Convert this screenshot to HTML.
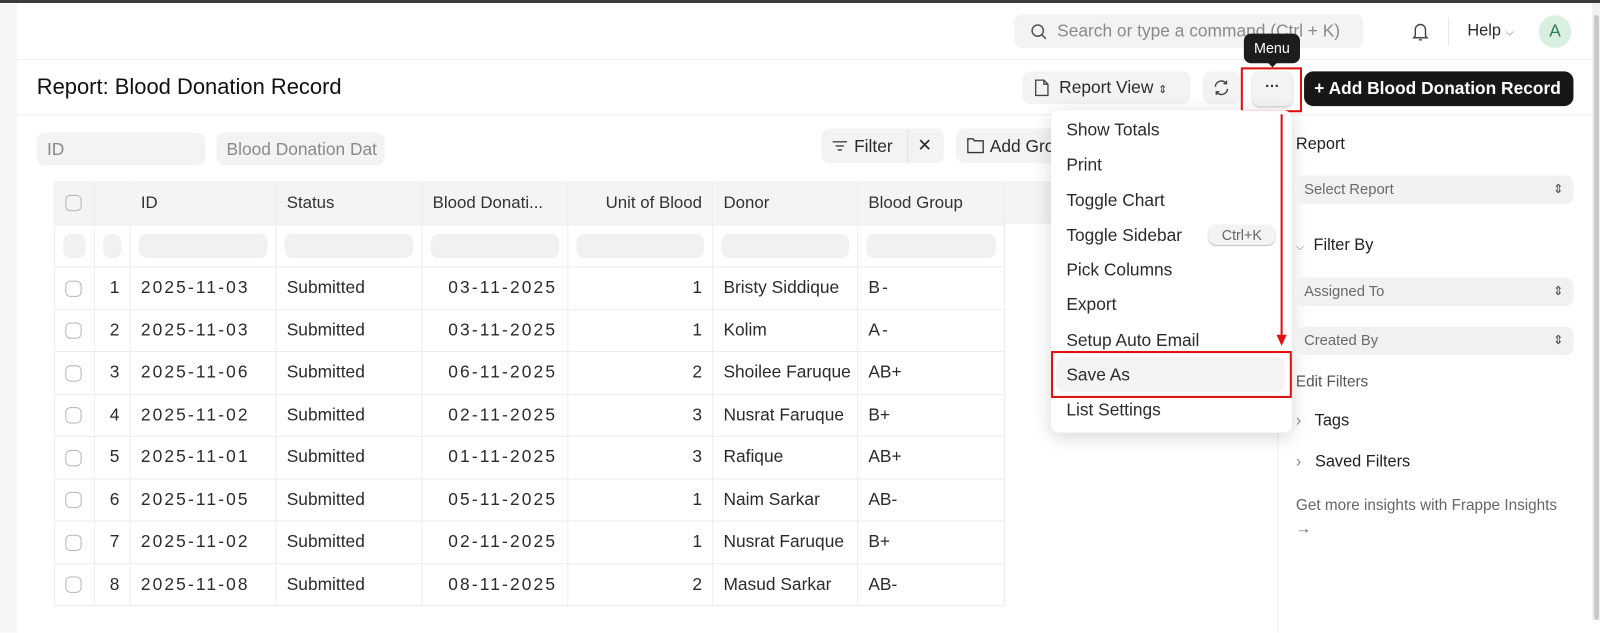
<!DOCTYPE html>
<html><head><meta charset="utf-8"><style>
*{box-sizing:border-box;margin:0;padding:0}
body{width:1600px;height:620px;overflow:hidden;background:#fff;font-family:"Liberation Sans",sans-serif;color:#2b2b2b;position:relative;font-size:17px}
#w{position:absolute;left:0;top:0;width:1568px;height:608px;transform:scale(1.0204);transform-origin:0 0}
.a{position:absolute}
.pill{position:absolute;background:#f3f3f3;border-radius:8px}
.ph{color:#8a8a8a}
table{position:absolute;left:53px;top:178px;width:931px;border-collapse:collapse;table-layout:fixed}
td{border:1px solid #ececec;height:41.5px;padding:0 10px;white-space:nowrap;overflow:hidden;font-size:17px}
tr.h td{background:#f4f4f4;color:#333;font-size:16.5px}
tr.f td{padding:0 8px}
.fb{height:24px;background:#f1f1f1;border-radius:8px}
.cb{display:inline-block;width:16px;height:16px;border:1.5px solid #b5b5b5;border-radius:5px;vertical-align:middle}
.num{text-align:right}
.dt{letter-spacing:2.1px}
.mi{position:absolute;left:1045px;font-size:17px;color:#2b2b2b}
.side{position:absolute;left:1270px;font-size:15px;color:#333}
.sel{position:absolute;left:1270px;width:272px;height:28px;background:#f1f1f1;border-radius:8px;font-size:14.5px;color:#6a6a6a;padding:6px 8px}
.sel:after{content:"⇕";position:absolute;right:10px;top:6px;font-size:12px;color:#444}
</style></head><body>
<div class="a" style="left:0;top:0;width:1600px;height:3px;background:#3a3a3a"></div>
<div class="a" style="left:1592px;top:3px;width:8px;height:617px;background:#f1f1f1"></div>
<div class="a" style="left:1594px;top:15px;width:5px;height:605px;background:#c9c9c9;border-radius:3px"></div>
<div id="w">
<div class="a" style="left:0;top:3px;width:17px;height:617px;background:#f6f6f6"></div>
<div class="a" style="left:17px;top:58px;width:1543px;height:1px;background:#eeeeee"></div>
<div class="a" style="left:17px;top:112px;width:1543px;height:1px;background:#eeeeee"></div>
<div class="a" style="left:1252px;top:112px;width:1px;height:508px;background:#eeeeee"></div>

<!-- navbar -->
<div class="pill" style="left:994px;top:14px;width:342px;height:33px"></div>
<svg class="a" style="left:1009px;top:22px" width="18" height="18" viewBox="0 0 18 18" fill="none" stroke="#555" stroke-width="1.5"><circle cx="8" cy="8" r="5.5"/><path d="M12 12l4 4"/></svg>
<div class="a ph" style="left:1036px;top:21px;font-size:17px;color:#8a8a8a;white-space:nowrap">Search or type a command (Ctrl + K)</div>
<svg class="a" style="left:1383px;top:21px" width="18" height="20" viewBox="0 0 18 20" fill="none" stroke="#444" stroke-width="1.4"><path d="M4 14V8a5 5 0 0110 0v6l1.5 2h-13z"/><path d="M7.5 18h3"/></svg>
<div class="a" style="left:1419px;top:17px;width:1px;height:28px;background:#e5e5e5"></div>
<div class="a" style="left:1438px;top:22px;font-size:16px">Help <span style="font-size:11px;color:#666">⌵</span></div>
<div class="a" style="left:1508px;top:15px;width:32px;height:32px;border-radius:50%;background:#d9f0e0;color:#2e7d4f;text-align:center;line-height:32px;font-size:17px">A</div>

<!-- header -->
<div class="a" style="left:36px;top:73px;font-size:21.5px;color:#111;white-space:nowrap">Report: Blood Donation Record</div>
<div class="pill" style="left:1002px;top:70px;width:165px;height:32px"></div>
<svg class="a" style="left:1013px;top:77px" width="16" height="18" viewBox="0 0 16 18" fill="none" stroke="#444" stroke-width="1.3"><path d="M2 1.5h8l4 4v11H2z"/><path d="M10 1.5v4h4"/></svg>
<div class="a" style="left:1038px;top:76px;font-size:17px">Report View <span style="font-size:11px">⇕</span></div>
<div class="pill" style="left:1179px;top:70px;width:37px;height:32px"></div>
<svg class="a" style="left:1188px;top:77px" width="18" height="18" viewBox="0 0 18 18" fill="none" stroke="#444" stroke-width="1.4"><path d="M3 8a6 6 0 0110.5-3.5M15 10a6 6 0 01-10.5 3.5"/><path d="M14 2v3h-3M4 16v-3h3"/></svg>
<div class="a" style="left:1227px;top:70px;width:40px;height:34px;background:#f3f3f3;border-radius:8px;box-shadow:0 1px 2px rgba(0,0,0,.2);text-align:center;font-size:14px;line-height:28px;font-weight:bold">···</div>
<div class="a" style="left:1216px;top:66px;width:60px;height:44px;border:2px solid #e01010"></div>
<div class="a" style="left:1219px;top:33px;width:55px;height:29px;background:#1c1c1c;border-radius:7px;color:#fff;font-size:14px;text-align:center;line-height:29px">Menu</div>
<div class="a" style="left:1242px;top:61px;width:0;height:0;border-left:5px solid transparent;border-right:5px solid transparent;border-top:5px solid #1c1c1c"></div>
<div class="a" style="left:1278px;top:70px;width:264px;height:34px;background:#171717;border-radius:9px;color:#fff;font-size:17px;font-weight:bold;line-height:34px;padding-left:10px;white-space:nowrap">+ Add Blood Donation Record</div>

<!-- filters -->
<div class="pill" style="left:36px;top:130px;width:165px;height:32px"></div>
<div class="a ph" style="left:46px;top:137px;font-size:17px">ID</div>
<div class="pill" style="left:212px;top:130px;width:165px;height:32px;overflow:hidden"><span class="ph" style="position:absolute;left:10px;top:7px;white-space:nowrap;width:148px;overflow:hidden;display:block">Blood Donation Date</span></div>
<div class="pill" style="left:805px;top:126px;width:120px;height:34px"></div>
<div class="a" style="left:889px;top:126px;width:1px;height:34px;background:#e3e3e3"></div>
<svg class="a" style="left:815px;top:136px" width="16" height="14" viewBox="0 0 16 14" stroke="#444" stroke-width="1.4"><path d="M1 3h14M4 7h8M6 11h4"/></svg>
<div class="a" style="left:837px;top:134px;font-size:17px">Filter</div>
<div class="a" style="left:899px;top:133px;font-size:17px">✕</div>
<div class="pill" style="left:937px;top:126px;width:110px;height:34px"></div>
<svg class="a" style="left:947px;top:134px" width="18" height="17" viewBox="0 0 18 17" fill="none" stroke="#333" stroke-width="1.3"><path d="M1.5 2h5l1.5 2h8.5v11.5h-15z"/></svg>
<div class="a" style="left:970px;top:134px;font-size:17px">Add Group By</div>

<!-- table -->
<div class="a" style="left:984px;top:178px;width:60px;height:41px;background:#f4f4f4;border-top:1px solid #ececec;border-bottom:1px solid #ececec"></div>
<table>
<colgroup><col style="width:39px"><col style="width:35px"><col style="width:143px"><col style="width:143px"><col style="width:143px"><col style="width:142px"><col style="width:142px"><col style="width:144px"></colgroup>
<tr class="h"><td><span class="cb"></span></td><td></td><td>ID</td><td>Status</td><td>Blood Donati...</td><td class="num">Unit of Blood</td><td>Donor</td><td>Blood Group</td></tr>
<tr class="f"><td><div class="fb"></div></td><td><div class="fb"></div></td><td><div class="fb"></div></td><td><div class="fb"></div></td><td><div class="fb"></div></td><td><div class="fb"></div></td><td><div class="fb"></div></td><td><div class="fb"></div></td></tr>
<tr><td><span class="cb"></span></td><td class="num">1</td><td class="dt">2025-11-03</td><td>Submitted</td><td class="num dt">03-11-2025</td><td class="num">1</td><td>Bristy Siddique</td><td class="dt">B-</td></tr>
<tr><td><span class="cb"></span></td><td class="num">2</td><td class="dt">2025-11-03</td><td>Submitted</td><td class="num dt">03-11-2025</td><td class="num">1</td><td>Kolim</td><td class="dt">A-</td></tr>
<tr><td><span class="cb"></span></td><td class="num">3</td><td class="dt">2025-11-06</td><td>Submitted</td><td class="num dt">06-11-2025</td><td class="num">2</td><td>Shoilee Faruque</td><td>AB+</td></tr>
<tr><td><span class="cb"></span></td><td class="num">4</td><td class="dt">2025-11-02</td><td>Submitted</td><td class="num dt">02-11-2025</td><td class="num">3</td><td>Nusrat Faruque</td><td>B+</td></tr>
<tr><td><span class="cb"></span></td><td class="num">5</td><td class="dt">2025-11-01</td><td>Submitted</td><td class="num dt">01-11-2025</td><td class="num">3</td><td>Rafique</td><td>AB+</td></tr>
<tr><td><span class="cb"></span></td><td class="num">6</td><td class="dt">2025-11-05</td><td>Submitted</td><td class="num dt">05-11-2025</td><td class="num">1</td><td>Naim Sarkar</td><td>AB-</td></tr>
<tr><td><span class="cb"></span></td><td class="num">7</td><td class="dt">2025-11-02</td><td>Submitted</td><td class="num dt">02-11-2025</td><td class="num">1</td><td>Nusrat Faruque</td><td>B+</td></tr>
<tr><td><span class="cb"></span></td><td class="num">8</td><td class="dt">2025-11-08</td><td>Submitted</td><td class="num dt">08-11-2025</td><td class="num">2</td><td>Masud Sarkar</td><td>AB-</td></tr>
</table>

<!-- dropdown menu -->
<div class="a" style="left:1030px;top:108px;width:236px;height:316px;background:#fff;border-radius:8px;box-shadow:0 4px 18px rgba(0,0,0,.16)"></div>
<div class="mi" style="top:118px">Show Totals</div>
<div class="mi" style="top:152px">Print</div>
<div class="mi" style="top:187px">Toggle Chart</div>
<div class="mi" style="top:221px">Toggle Sidebar</div>
<div class="a" style="left:1184px;top:220px;width:66px;height:20px;background:#f3f3f3;border-radius:8px;box-shadow:0 1px 1px rgba(0,0,0,.25);font-size:14px;color:#666;text-align:center;line-height:20px">Ctrl+K</div>
<div class="mi" style="top:255px">Pick Columns</div>
<div class="mi" style="top:289px">Export</div>
<div class="mi" style="top:324px">Setup Auto Email</div>
<div class="a" style="left:1035px;top:350px;width:224px;height:34px;background:#f3f3f3;border-radius:8px"></div>
<div class="mi" style="top:358px">Save As</div>
<div class="a" style="left:1030px;top:344px;width:236px;height:46px;border:2px solid #e01010"></div>
<div class="mi" style="top:392px">List Settings</div>
<div class="a" style="left:1255px;top:112px;width:2px;height:220px;background:#e01010"></div>
<div class="a" style="left:1251px;top:328px;width:0;height:0;border-left:5px solid transparent;border-right:5px solid transparent;border-top:11px solid #e01010"></div>

<!-- sidebar -->
<div class="side" style="top:133px;font-size:16px;color:#222">Report</div>
<div class="sel" style="top:172px">Select Report</div>
<div class="side" style="top:232px;font-size:16px;color:#222"><span style="font-size:11px;color:#777">⌵</span>&nbsp; Filter By</div>
<div class="sel" style="top:272px">Assigned To</div>
<div class="sel" style="top:320px">Created By</div>
<div class="side" style="top:366px;color:#555">Edit Filters</div>
<div class="side" style="top:404px;font-size:16px;color:#222"><span style="color:#888">›</span>&nbsp;&nbsp; Tags</div>
<div class="side" style="top:444px;font-size:16px;color:#222"><span style="color:#888">›</span>&nbsp;&nbsp; Saved Filters</div>
<div class="side" style="top:484px;color:#666;width:275px;line-height:23px">Get more insights with Frappe Insights →</div>
</div>
</body></html>
